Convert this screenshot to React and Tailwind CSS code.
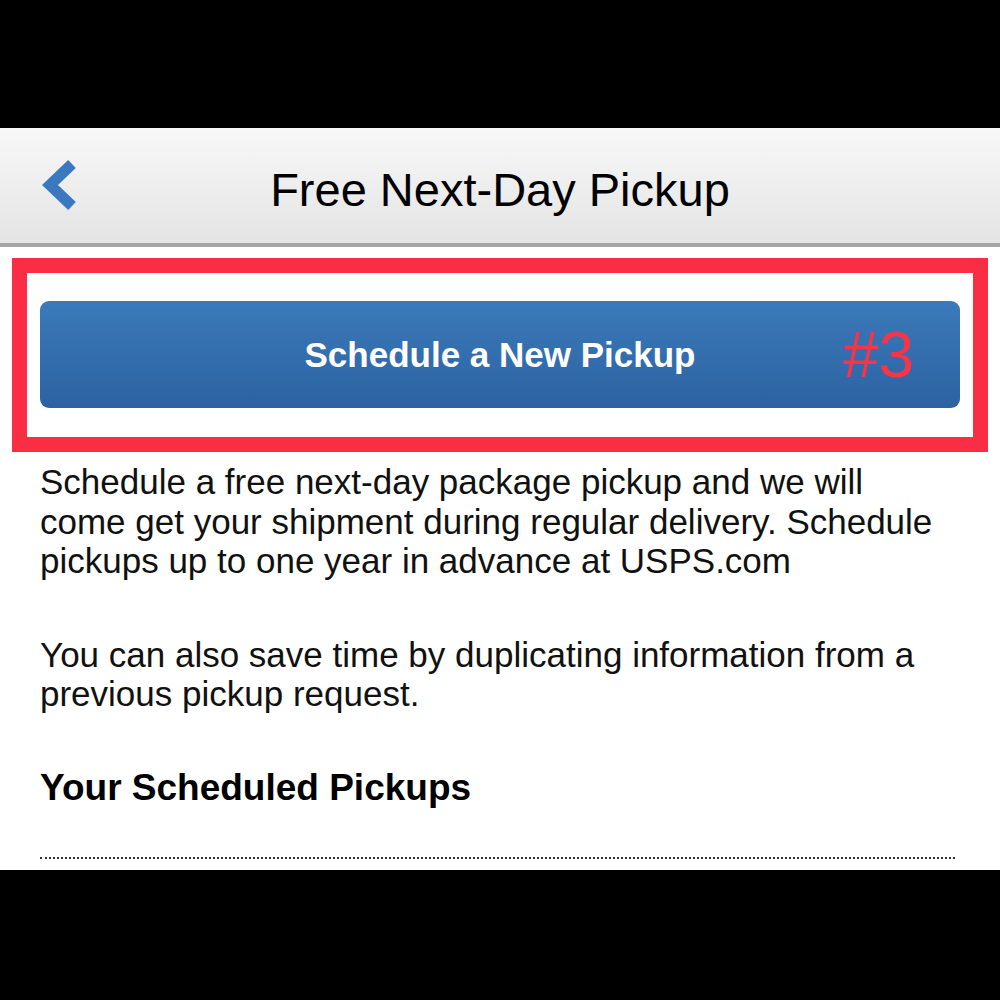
export default function App() {
  const font = { fontFamily: '"Liberation Sans", Arial, Helvetica, sans-serif' };
  return (
    <div className="w-[1000px] h-[1000px] bg-black flex flex-col overflow-hidden" style={font}>
      <div className="h-[128px] shrink-0 bg-black" />
      <div className="h-[119px] shrink-0 bg-gradient-to-b from-[#f8f8f8] to-[#e4e4e4] border-b-4 border-[#a6a6a6] grid grid-cols-[1fr_auto_1fr] items-center">
        <div className="pl-[40px] flex items-center">
          <svg width="40" height="52" viewBox="0 0 40 52">
            <path d="M32 4 L10 25 L32 46" fill="none" stroke="#3a78bf" strokeWidth="11" strokeLinejoin="miter" />
          </svg>
        </div>
        <div className="text-[47px] text-black leading-none pt-[8px]">Free Next-Day Pickup</div>
        <div />
      </div>
      <div className="h-[623px] shrink-0 bg-white flex flex-col">
        <div className="mt-[11px] mx-[12px] border-[15px] border-[#fb2d45] pt-[28px] pb-[29px] px-[13px]">
          <div className="relative h-[107px] rounded-[9px] bg-gradient-to-b from-[#3b7aba] to-[#2c62a2] flex items-center justify-center">
            <span className="text-white font-bold text-[35px] leading-none">Schedule a New Pickup</span>
            <span className="absolute left-[803px] top-[22px] text-[#f73547] text-[64px] leading-none">#3</span>
          </div>
        </div>
        <p className="mt-[10px] ml-[40px] w-[902px] text-[35px] leading-[39.5px] text-[#111]">
          Schedule a free next-day package pickup and we will come get your shipment during regular delivery. Schedule pickups up to one year in advance at USPS.com
        </p>
        <p className="mt-[54px] ml-[40px] w-[902px] text-[35px] leading-[39.5px] text-[#111]">
          You can also save time by duplicating information from a previous pickup request.
        </p>
        <h2 className="mt-[52px] px-[40px] text-[37px] leading-[44px] font-bold text-black">Your Scheduled Pickups</h2>
        <div className="mt-[47px] mx-[40px] w-[915px] border-t-2 border-dotted border-[#333]" />
      </div>
    </div>
  );
}
